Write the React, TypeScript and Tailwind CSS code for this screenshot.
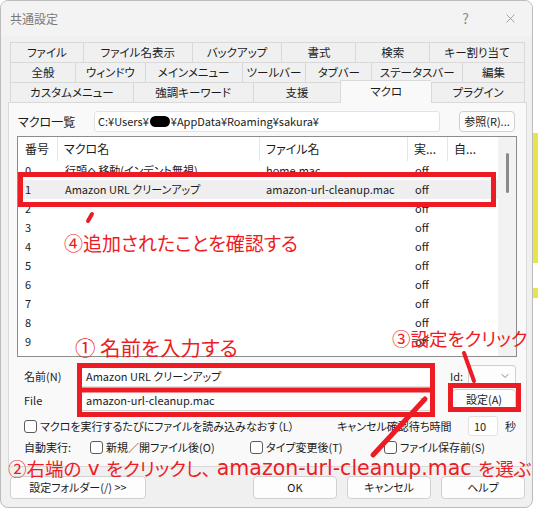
import React from 'react';
import { X, ChevronDown } from 'lucide-react';

const Tab: React.FC<{ label: string; className: string; active?: boolean }> = ({ label, className, active }) => (
  <div
    className={`${className} flex items-center justify-center border-t border-l border-[#d9d9d9] text-[11.5px] leading-none text-[#1b1b1b] ${
      active ? 'h-[23px] -mb-px bg-[#f9f9f9] relative z-10' : 'h-[20px] bg-[#f0f0f0]'
    }`}
  >
    {label}
  </div>
);

const Check: React.FC = () => <span className="w-[13px] h-[13px] shrink-0 rounded-[3px] border border-[#5c5c5c] bg-white" />;

const rows = [
  { no: '0', name: '行頭へ移動(インデント無視)', file: 'home.mac', run: 'off' },
  { no: '1', name: 'Amazon URL クリーンアップ', file: 'amazon-url-cleanup.mac', run: 'off', sel: true },
  { no: '2', name: '', file: '', run: 'off' },
  { no: '3', name: '', file: '', run: 'off' },
  { no: '4', name: '', file: '', run: 'off' },
  { no: '5', name: '', file: '', run: 'off' },
  { no: '6', name: '', file: '', run: 'off' },
  { no: '7', name: '', file: '', run: 'off' },
  { no: '8', name: '', file: '', run: 'off' },
  { no: '9', name: '', file: '', run: 'off' },
];

export default function App() {
  return (
    <div className="relative w-[538px] h-[509px] bg-white overflow-hidden flex font-['Noto_Sans_CJK_JP',sans-serif] [font-feature-settings:'palt'] text-[11px] text-[#1b1b1b]">
      {/* Dialog */}
      <div className="w-[533px] h-[508px] shrink-0 rounded-[8px] border border-[#bcbcbc] bg-[#f0f0f0] flex flex-col overflow-hidden">
        {/* Title bar */}
        <div className="h-[35px] flex items-center bg-[#f3f3f3]">
          <span className="ml-[9px] text-[12px] text-[#7a7a7a]">共通設定</span>
          <span className="ml-auto mr-[34px] text-[14px] text-[#8a8a8a]">?</span>
          <X className="w-[15px] h-[15px] mr-[14px] text-[#8a8a8a]" strokeWidth={1.2} />
        </div>

        {/* Tabs */}
        <div className="mt-[6px] ml-[9px] w-[515px] flex flex-col">
          <div className="flex h-[20px] border-r border-[#d9d9d9]">
            <Tab label="ファイル" className="w-[73px]" />
            <Tab label="ファイル名表示" className="w-[109px]" />
            <Tab label="バックアップ" className="w-[90px]" />
            <Tab label="書式" className="w-[74px]" />
            <Tab label="検索" className="w-[74px]" />
            <Tab label="キー割り当て" className="w-[95px]" />
          </div>
          <div className="flex h-[20px] border-r border-[#d9d9d9]">
            <Tab label="全般" className="w-[65px]" />
            <Tab label="ウィンドウ" className="w-[70px]" />
            <Tab label="メインメニュー" className="w-[97px]" />
            <Tab label="ツールバー" className="w-[64px]" />
            <Tab label="タブバー" className="w-[66px]" />
            <Tab label="ステータスバー" className="w-[91px]" />
            <Tab label="編集" className="w-[62px]" />
          </div>
          <div className="flex items-end h-[20px] border-r border-[#d9d9d9]">
            <Tab label="カスタムメニュー" className="w-[123px]" />
            <Tab label="強調キーワード" className="w-[120px]" />
            <Tab label="支援" className="w-[88px]" />
            <Tab label="マクロ" className="w-[91px]" active />
            <Tab label="プラグイン" className="w-[93px]" />
          </div>
        </div>

        {/* Panel */}
        <div className="ml-[7px] w-[519px] h-[365px] border border-[#d9d9d9] bg-[#f9f9f9] flex flex-col">
          <div className="mt-[8px] h-[21px] flex items-center">
            <span className="ml-[9px] w-[76px] text-[12px]">マクロ一覧</span>
            <div className="w-[346px] h-[21px] flex items-center pl-[3px] bg-white border border-[#e2e2e2] rounded-[3px] whitespace-nowrap">
              C:¥Users¥<span className="inline-block mx-[1px] w-[20px] h-[11px] rounded-full bg-black" />¥AppData¥Roaming¥sakura¥
            </div>
            <button className="ml-[19px] w-[56px] h-[21px] flex items-center justify-center bg-[#fdfdfd] border border-[#d0d0d0] rounded-[4px]">
              参照(R)...
            </button>
          </div>

          {/* List */}
          <div className="mt-[4px] ml-[8px] w-[500px] h-[221px] border border-[#8c8c8c] bg-white flex overflow-hidden">
            <div className="flex-1 flex flex-col">
              <div className="h-[24px] flex items-center shrink-0 text-[12px]">
                <div className="w-[40px] h-full flex items-center pl-[7px] border-r border-[#e5e5e5]">番号</div>
                <div className="w-[202px] h-full flex items-center pl-[6px] border-r border-[#e5e5e5]">マクロ名</div>
                <div className="w-[148px] h-full flex items-center pl-[6px] border-r border-[#e5e5e5]">ファイル名</div>
                <div className="w-[40px] h-full flex items-center pl-[6px] border-r border-[#e5e5e5]">実...</div>
                <div className="w-[42px] h-full flex items-center pl-[6px]">自...</div>
              </div>
              {rows.map((r) => (
                <div key={r.no} className={`h-[19px] flex items-center shrink-0 ${r.sel ? 'bg-[#efefef]' : ''}`}>
                  <div className="w-[40px] pl-[7px]">{r.no}</div>
                  <div className="w-[202px] pl-[7px] whitespace-nowrap">{r.name}</div>
                  <div className="w-[148px] pl-[6px] whitespace-nowrap">{r.file}</div>
                  <div className="w-[40px] pl-[7px]">{r.run}</div>
                </div>
              ))}
            </div>
            <div className="w-[18px] bg-[#f2f2f2] flex justify-center">
              <div className="mt-[16px] w-[3px] h-[40px] rounded-full bg-[#8a8a8a]" />
            </div>
          </div>

          {/* Name */}
          <div className="mt-[8px] h-[22px] flex items-center">
            <span className="ml-[15px] w-[56px]">名前(N)</span>
            <div className="w-[352px] h-[22px] flex items-center pl-[5px] bg-white border border-[#e2e2e2] rounded-[3px]">
              Amazon URL クリーンアップ
            </div>
            <span className="ml-[18px] w-[18px]">Id:</span>
            <div className="w-[48px] h-[22px] flex items-center justify-end pr-[4px] bg-[#fdfdfd] border border-[#d0d0d0] rounded-[3px]">
              <ChevronDown className="w-[12px] h-[12px] text-[#606060]" strokeWidth={1.5} />
            </div>
          </div>

          {/* File */}
          <div className="mt-[2px] h-[22px] flex items-center">
            <span className="ml-[15px] w-[56px]">File</span>
            <div className="w-[355px] h-[22px] flex items-center pl-[5px] pr-[4px] bg-[#fdfdfd] border border-[#d0d0d0] rounded-[3px]">
              amazon-url-cleanup.mac
              <ChevronDown className="ml-auto w-[12px] h-[12px] text-[#606060]" strokeWidth={1.5} />
            </div>
            <button className="ml-[17px] -mt-[2px] w-[64px] h-[20px] flex items-center justify-center bg-[#fdfdfd] border border-[#d0d0d0] rounded-[4px]">
              設定(A)
            </button>
          </div>

          {/* Reload checkbox / cancel wait */}
          <div className="mt-[5px] h-[20px] flex items-center">
            <div className="ml-[15px] w-[313px] flex items-center gap-[3px] whitespace-nowrap">
              <Check />
              <span>マクロを実行するたびにファイルを読み込みなおす（L）</span>
            </div>
            <span className="w-[131px] whitespace-nowrap">キャンセル確認待ち時間</span>
            <div className="w-[30px] h-[20px] flex items-center pl-[5px] bg-white border border-[#e2e2e2] rounded-[3px]">10</div>
            <span className="ml-[7px]">秒</span>
          </div>

          {/* Auto run */}
          <div className="mt-[2px] h-[18px] flex items-center whitespace-nowrap">
            <span className="ml-[15px] w-[66px]">自動実行:</span>
            <div className="w-[160px] flex items-center gap-[3px]">
              <Check />
              <span>新規／開ファイル後(O)</span>
            </div>
            <div className="w-[134px] flex items-center gap-[3px]">
              <Check />
              <span>タイプ変更後(T)</span>
            </div>
            <div className="flex items-center gap-[3px]">
              <Check />
              <span>ファイル保存前(S)</span>
            </div>
          </div>
        </div>

        {/* Bottom buttons */}
        <div className="mt-[9px] h-[23px] flex items-center">
          <button className="ml-[9px] w-[136px] h-[23px] flex items-center justify-center bg-[#fdfdfd] border border-[#d0d0d0] rounded-[4px]">
            設定フォルダー(/) &gt;&gt;
          </button>
          <div className="ml-auto mr-[7px] flex gap-[10px]">
            <button className="w-[84px] h-[23px] flex items-center justify-center bg-[#fdfdfd] border border-[#d0d0d0] rounded-[4px]">OK</button>
            <button className="w-[84px] h-[23px] flex items-center justify-center bg-[#fdfdfd] border border-[#d0d0d0] rounded-[4px]">キャンセル</button>
            <button className="w-[84px] h-[23px] flex items-center justify-center bg-[#fdfdfd] border border-[#d0d0d0] rounded-[4px]">ヘルプ</button>
          </div>
        </div>
      </div>

      {/* Window behind */}
      <div className="flex-1 flex flex-col">
        <div className="h-[133px]" />
        <div className="h-[130px] bg-[#e6e64c]" />
        <div className="h-[25px]" />
        <div className="h-[10px] bg-[#e6e64c]" />
      </div>

      {/* Annotations */}
      <svg className="absolute inset-0 pointer-events-none" width="538" height="509" viewBox="0 0 538 509">
        <g stroke="#ed1c24" fill="none" strokeWidth="5">
          <rect x="20.5" y="174.5" width="473" height="30" />
          <rect x="79.5" y="365.5" width="353" height="49" />
          <line x1="77" y1="390" x2="435" y2="390" />
          <rect x="450.5" y="385.5" width="68" height="24" />
        </g>
        <g stroke="#ed1c24" strokeLinecap="round">
          <line x1="88" y1="221" x2="92" y2="214" strokeWidth="4" />
          <line x1="464" y1="353" x2="474" y2="381" strokeWidth="4" />
          <line x1="425" y1="399" x2="373" y2="455" strokeWidth="5" />
        </g>
      </svg>
      <div className="absolute left-[64px] top-[233px] text-[19px] leading-none text-[#ed1c24] whitespace-nowrap">④追加されたことを確認する</div>
      <div className="absolute left-[75px] top-[337px] text-[20.5px] leading-none text-[#ed1c24] whitespace-nowrap">① 名前を入力する</div>
      <div className="absolute left-[392px] top-[329px] text-[18.5px] leading-none text-[#ed1c24] whitespace-nowrap">③設定をクリック</div>
      <div className="absolute left-[8px] top-[457px] h-[22px] flex items-center text-[18.5px] leading-none text-[#ed1c24] whitespace-nowrap">
        <span>②右端の</span>
        <span className="font-['DejaVu_Sans',sans-serif] text-[20px]">&nbsp;v&nbsp;</span>
        <span>をクリックし、</span>
        <span className="ml-[6px] font-['DejaVu_Sans',sans-serif] text-[20.5px]">amazon-url-cleanup.mac&nbsp;</span>
        <span>を選ぶ</span>
      </div>
    </div>
  );
}
